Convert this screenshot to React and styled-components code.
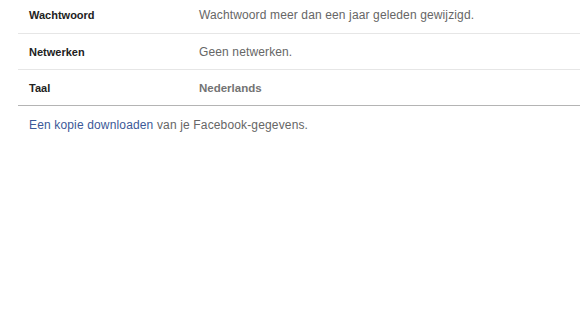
import React from "react";
import styled, { createGlobalStyle } from "styled-components";

const Global = createGlobalStyle`
  html, body { margin: 0; padding: 0; background: #fff; }
  body { font-family: "Liberation Sans", Arial, Helvetica, sans-serif; }
`;

const Page = styled.div`
  width: 580px;
  height: 318px;
  overflow: hidden;
  padding-left: 18px;
  box-sizing: border-box;
`;

const Table = styled.div`
  margin-top: -3px;
  border-bottom: 1px solid #b4b4b4;
`;

const Row = styled.div`
  display: grid;
  grid-template-columns: 170px 1fr;
  align-items: center;
  padding-left: 11px;
  border-top: ${(p) => (p.$first ? "none" : "1px solid #e6e6e6")};
  height: ${(p) => (p.$first ? "36px" : "35px")};
`;

const Label = styled.div`
  font-size: 11px;
  font-weight: bold;
  color: #222;
`;

const Value = styled.div`
  font-size: ${(p) => (p.$bold ? "11.5px" : "12px")};
  letter-spacing: ${(p) => (p.$bold ? "0" : "0.13px")};
  color: ${(p) => (p.$bold ? "#737373" : "#666")};
  font-weight: ${(p) => (p.$bold ? "bold" : "normal")};
`;

const Footer = styled.p`
  margin: 12px 0 0 11px;
  font-size: 12px;
  letter-spacing: 0.15px;
  color: #666;
`;

const Link = styled.a`
  color: #3b5998;
  text-decoration: none;
`;

export default function App() {
  return (
    <>
      <Global />
      <Page>
        <Table>
          <Row $first>
            <Label>Wachtwoord</Label>
            <Value>Wachtwoord meer dan een jaar geleden gewijzigd.</Value>
          </Row>
          <Row>
            <Label>Netwerken</Label>
            <Value>Geen netwerken.</Value>
          </Row>
          <Row>
            <Label>Taal</Label>
            <Value $bold>Nederlands</Value>
          </Row>
        </Table>
        <Footer>
          <Link href="#">Een kopie downloaden</Link> van je Facebook-gegevens.
        </Footer>
      </Page>
    </>
  );
}
